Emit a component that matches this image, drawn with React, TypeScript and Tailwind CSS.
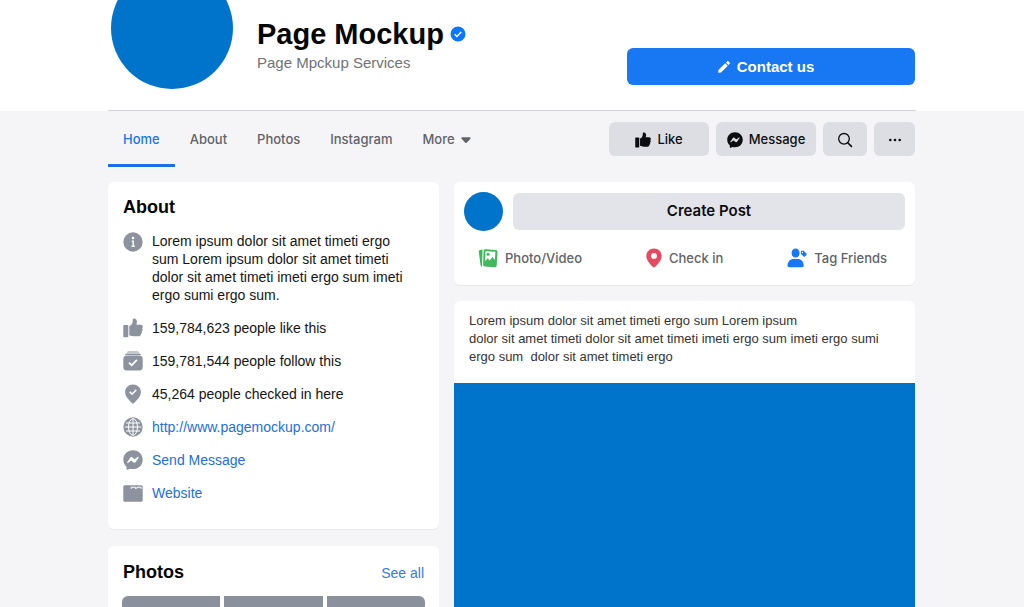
import type { ReactNode } from 'react'

interface IconProps {
  className?: string
}

interface InfoItem {
  icon: ReactNode
  text: string
  href?: string
}

const uiFont = 'font-[Inter,sans-serif]'

function ThumbIcon({ className }: IconProps) {
  return (
    <svg viewBox="0 0 20 20" className={className} fill="currentColor" aria-hidden="true">
      <rect x="0.3" y="7" width="5" height="12.3" rx="0.8" />
      <path d="M6.3 8.2C8.5 7.200 9.6 5.500 9.7 3.300V1.900c0-1 .8-1.500 1.700-1.300 1.600.3 2.500 1.600 2.500 3.200 0 1.100-.2 2-.5 2.900h4.300c1.300 0 2.100.9 2.100 2 0 .7-.3 1.200-.7 1.500.4.400.7.900.6 1.600-.1.700-.5 1.200-1 1.500.2.400.3.800.2 1.300-.1.700-.6 1.200-1.100 1.400.1.200.1.500 0 .8-.2.900-1 1.500-2 1.500H11c-1.800 0-3.300-.3-4.700-1z" />
    </svg>
  )
}

function MessengerIcon({ className }: IconProps) {
  return (
    <svg viewBox="0 0 20 20" className={className} fill="currentColor" aria-hidden="true">
      <path
        fillRule="evenodd"
        d="M10 .3C4.500.3.300 4.300.300 9.700c0 2.900 1.200 5.300 3.200 7v2.300c0 .7.700 1 1.300.7l2-1c1 .3 2.100.4 3.200.4 5.500 0 9.700-4 9.700-9.400S15.500.3 10 .3ZM4.200 12.200l2.900-4.500c.5-.7 1.400-.9 2.100-.4l2.200 1.700c.2.1.4.1.600 0l2.900-2.200c.5-.3 1.100.2.8.7l-2.900 4.500c-.5.7-1.400.9-2.100.4L8.500 10.700c-.2-.1-.4-.1-.6 0L5 12.900c-.4.3-1.100-.2-.8-.7Z"
      />
    </svg>
  )
}

function InfoIcon() {
  return (
    <svg viewBox="0 0 20 20" className="size-5" aria-hidden="true">
      <circle cx="10" cy="10" r="9.7" fill="currentColor" />
      <circle cx="10" cy="6" r="1.3" fill="#fff" />
      <path d="M8.700 9.100h1.500v5M8.600 14.300h3.200" fill="none" stroke="#fff" strokeWidth="1.400" />
    </svg>
  )
}

function FollowIcon() {
  return (
    <svg viewBox="0 0 20 20" className="size-5" fill="none" aria-hidden="true">
      <path d="M3.600 1.600C4 .8 4.700.4 5.600.4h8.800c.9 0 1.600.4 2 1.200z" fill="currentColor" />
      <path d="M2 3.900c.3-1 1-1.500 2-1.500h12c1 0 1.700.5 2 1.500z" fill="currentColor" />
      <rect x="0.300" y="4.400" width="19.400" height="15.200" rx="3.500" fill="currentColor" />
      <path d="m6 11.600 2.700 2.700 5.200-5.400" stroke="#fff" strokeWidth="1.800" />
    </svg>
  )
}

function CheckinIcon() {
  return (
    <svg viewBox="0 0 20 20" className="size-5" fill="none" aria-hidden="true">
      <path
        d="M10 .4c-4.400 0-7.900 3.200-7.900 7.500 0 4.800 4.600 8.700 7 11.300.5.500 1.300.500 1.800 0 2.400-2.600 7-6.500 7-11.300C17.900 3.600 14.400.4 10 .4Z"
        fill="currentColor"
      />
      <path d="m6.700 7.900 2.400 2.300 4.200-4.400" stroke="#fff" strokeWidth="1.600" />
    </svg>
  )
}

function GlobeIcon() {
  return (
    <svg viewBox="0 0 20 20" className="size-5" fill="none" aria-hidden="true">
      <circle cx="10" cy="10" r="9.700" fill="currentColor" />
      <g stroke="#fff" strokeWidth="1">
        <ellipse cx="10" cy="10" rx="4.500" ry="8.300" />
        <path d="M10 1.500v17M1.700 10h16.600M3 6h14M3 14h14" />
      </g>
    </svg>
  )
}

function WebsiteIcon() {
  return (
    <svg viewBox="0 0 20 20" className="size-5" aria-hidden="true">
      <rect x="0.300" y="2.300" width="19.400" height="16.400" rx="1.500" fill="currentColor" />
      <path d="M8.200 5.900V4.200h4.200v1.700M13.900 5.900V4.200h4.200v1.700" fill="none" stroke="#fff" strokeWidth="1" />
    </svg>
  )
}

function VerifiedIcon() {
  return (
    <svg viewBox="0 0 16 16" className="size-4" role="img" aria-label="Verified">
      <circle cx="8" cy="8" r="7.500" fill="#0a78fa" />
      <path d="m4.700 8.200 2.200 2.200 4.300-4.500" fill="none" stroke="#fff" strokeWidth="1.400" />
    </svg>
  )
}

function PencilIcon() {
  return (
    <svg viewBox="0 0 12 12" className="size-3" fill="currentColor" aria-hidden="true">
      <path d="M.4 9 7.200 2.200l2.600 2.600L3 11.600l-2.700.2zM8 1.400 9.200.400c.4-.4.900-.4 1.300 0l1.100 1.100c.4.400.4.900 0 1.300L10.500 4z" />
    </svg>
  )
}

function SearchIcon() {
  return (
    <svg viewBox="0 0 16 16" className="size-4" fill="none" stroke="currentColor" strokeLinecap="round" aria-hidden="true">
      <circle cx="7" cy="6.800" r="5.300" strokeWidth="1.300" />
      <path d="m11 11 3.400 3.300" strokeWidth="1.700" />
    </svg>
  )
}

function DotsIcon() {
  return (
    <svg viewBox="0 0 14 4" className="h-1 w-3.5" fill="currentColor" aria-hidden="true">
      <circle cx="2.300" cy="2" r="1.300" />
      <circle cx="7" cy="2" r="1.300" />
      <circle cx="11.700" cy="2" r="1.300" />
    </svg>
  )
}

function PhotoIcon() {
  return (
    <svg viewBox="0 0 20 20" className="size-5" aria-hidden="true">
      <path d="M1.500 2.300 4 1.600c.4-.1.600.1.600.5L4 18.200c0 .5-.6.600-.9.200-.4-.5-.6-1.200-.7-2L.8 3.700c-.1-.8.100-1.200.7-1.400Z" fill="#42b85e" />
      <path d="M7.500 1.200 17.700 1.900c1.200.1 1.900.9 1.800 2l-.8 13.600c-.1 1.200-.9 1.900-2 1.800l-9.900-.7c-1.100-.1-1.800-.9-1.700-2l.5-13.700c0-1.100.8-1.800 1.900-1.700Z" fill="#42b85e" />
      <path d="m7.500 3.200 9.900.6-.5 8.300-2.500-3-2.700 3.300-2-2.200-2.500 3z" fill="#fff" />
      <circle cx="10" cy="6.300" r="1.500" fill="#42b85e" />
    </svg>
  )
}

function PinIcon() {
  return (
    <svg viewBox="0 0 16 20" className="h-5 w-4" fill="#e34b60" aria-hidden="true">
      <path
        fillRule="evenodd"
        d="M8 .4C3.600.4.300 3.600.300 7.900c0 4.700 4.400 8.500 6.800 11.200.5.600 1.300.6 1.800 0 2.400-2.700 6.800-6.500 6.800-11.200C15.700 3.600 12.400.4 8 .4Zm0 10.400a2.900 2.900 0 1 1 0-5.800 2.900 2.900 0 0 1 0 5.800Z"
      />
    </svg>
  )
}

function TagIcon() {
  return (
    <svg viewBox="0 0 20 20" className="size-5" fill="#1877f2" aria-hidden="true">
      <ellipse cx="8.600" cy="5" rx="4" ry="4.500" />
      <path d="M.5 17.500c0-4 2.700-6.600 6-6.600h4.200c3.300 0 6 2.600 6 6.600 0 1-.8 1.700-1.800 1.700H2.300c-1 0-1.800-.7-1.800-1.700Z" />
      <path d="M13.800 3.900c0-.7.400-1.100 1.100-1.100h1.800l2.700 2.700c.5.500.5.900 0 1.400l-1.500 1.500c-.5.500-.9.500-1.400 0L13.800 5.700z" />
      <circle cx="15.400" cy="4.400" r=".7" fill="#fff" />
    </svg>
  )
}

const tabs = ['Home', 'About', 'Photos', 'Instagram']

const info: InfoItem[] = [
  { icon: <ThumbIcon className="size-5" />, text: '159,784,623 people like this' },
  { icon: <FollowIcon />, text: '159,781,544 people follow this' },
  { icon: <CheckinIcon />, text: '45,264 people checked in here' },
  { icon: <GlobeIcon />, text: 'http://www.pagemockup.com/', href: '#site' },
  { icon: <MessengerIcon className="size-5" />, text: 'Send Message', href: '#message' },
  { icon: <WebsiteIcon />, text: 'Website', href: '#website' },
]

const postActions = [
  { icon: <PhotoIcon />, label: 'Photo/Video' },
  { icon: <PinIcon />, label: 'Check in' },
  { icon: <TagIcon />, label: 'Tag Friends' },
]

function Header() {
  return (
    <header className="overflow-hidden bg-white">
      <div className="mx-auto flex max-w-[808px] items-start border-b border-[#d3d4d8] pr-px pb-[21px] pl-[3px]">
        <div className="-mt-[33px] size-[122px] shrink-0 rounded-full bg-[#0074cb]" />
        <div className="ml-6 pt-4">
          <h1 className="flex items-center gap-1.5 text-[29px] leading-9 font-bold text-[#050505]">
            Page Mockup
            <VerifiedIcon />
          </h1>
          <p className="text-[15px] leading-[22px] text-[#707276]">Page Mpckup Services</p>
        </div>
        <button
          type="button"
          className="mt-12 ml-auto flex h-[37px] w-72 items-center justify-center gap-[7px] rounded-md bg-[#1877f2] pt-px pr-2.5 text-[15px] font-bold text-white"
        >
          <PencilIcon />
          Contact us
        </button>
      </div>
    </header>
  )
}

function NavBar() {
  const action = 'flex h-[34px] items-center justify-center gap-1.5 rounded-md bg-[#dddee3] pt-px'

  return (
    <div className={`mx-auto flex max-w-[808px] justify-between pr-px text-[13px] font-medium ${uiFont}`}>
      <nav className="flex h-14">
        {tabs.map((tab) => (
          <a
            key={tab}
            href={`#${tab.toLowerCase()}`}
            className={`flex items-center border-b-[3px] px-[15px] pt-1 ${
              tab === 'Home' ? 'border-[#1a6fe8] text-[#1b74f0]' : 'border-transparent text-[#606368]'
            }`}
          >
            {tab}
          </a>
        ))}
        <button type="button" className="flex items-center gap-1.5 border-b-[3px] border-transparent px-[15px] pt-1 text-[#606368]">
          More
          <svg viewBox="0 0 10 6" className="h-1.5 w-2.5" fill="currentColor" aria-hidden="true">
            <path d="M1.300.2h7.400c1 0 1.300.9.700 1.500L6 5.500c-.6.600-1.400.6-2 0L.6 1.700C0 1.100.300.2 1.300.2Z" />
          </svg>
        </button>
      </nav>
      <div className="mt-[11px] flex gap-[7px] text-[#0c0d0f]">
        <button type="button" className={`${action} w-[100px]`}>
          <ThumbIcon className="size-4" />
          Like
        </button>
        <button type="button" className={`${action} w-[100px]`}>
          <MessengerIcon className="size-4" />
          Message
        </button>
        <button type="button" aria-label="Search" className={`${action} w-11`}>
          <SearchIcon />
        </button>
        <button type="button" aria-label="More options" className={`${action} w-[41px]`}>
          <DotsIcon />
        </button>
      </div>
    </div>
  )
}

function AboutCard() {
  return (
    <section className="rounded-md bg-white px-[15px] pt-[13px] pb-[26px] shadow-2xs">
      <h2 className="text-lg leading-6 font-bold text-[#050505]">About</h2>
      <ul className="mt-[13px] flex flex-col gap-[13px] text-sm text-[#141414]">
        <li className="flex gap-[9px] pb-px leading-[18px]">
          <span className="shrink-0 text-[#8c939e]">
            <InfoIcon />
          </span>
          <p>
            Lorem ipsum dolor sit amet timeti ergo
            <br />
            sum Lorem ipsum dolor sit amet timeti
            <br />
            dolor sit amet timeti imeti ergo sum imeti
            <br />
            ergo sumi ergo sum.
          </p>
        </li>
        {info.map((item) => (
          <li key={item.text} className="flex items-center gap-[9px]">
            <span className="shrink-0 text-[#8c939e]">{item.icon}</span>
            {item.href ? (
              <a href={item.href} className="text-[#216fdb]">
                {item.text}
              </a>
            ) : (
              <span>{item.text}</span>
            )}
          </li>
        ))}
      </ul>
    </section>
  )
}

function PhotosCard() {
  return (
    <section className="rounded-md bg-white p-3.5 shadow-2xs">
      <div className="flex items-center justify-between px-px">
        <h2 className="text-lg leading-6 font-bold text-[#050505]">Photos</h2>
        <a href="#photos" className="pt-0.5 text-sm text-[#2f7de9]">
          See all
        </a>
      </div>
      <div className="mt-3 grid grid-cols-3 gap-1 overflow-hidden rounded-md">
        {[0, 1, 2].map((i) => (
          <div key={i} className="aspect-square bg-[#8b919c]" />
        ))}
      </div>
    </section>
  )
}

function CreatePostCard() {
  return (
    <section className={`rounded-md bg-white px-2.5 pt-2.5 pb-[17px] shadow-2xs ${uiFont}`}>
      <div className="flex items-center gap-2.5">
        <div className="size-[39px] shrink-0 rounded-full bg-[#0074cb]" />
        <button type="button" className="h-[37px] flex-1 rounded-md bg-[#e3e4e9] text-[15px] font-semibold text-[#0c0d0f]">
          Create Post
        </button>
      </div>
      <div className="mt-[17px] flex justify-between pr-[18px] pl-3.5">
        {postActions.map((item) => (
          <button key={item.label} type="button" className="flex items-center gap-[7px] text-[13px] leading-5 font-medium text-[#606368]">
            {item.icon}
            {item.label}
          </button>
        ))}
      </div>
    </section>
  )
}

function Post() {
  return (
    <article className="overflow-hidden rounded-md bg-white shadow-2xs">
      <p className="px-[15px] pt-[11px] pb-[17px] text-[13px] leading-[18px] text-[#333]">
        Lorem ipsum dolor sit amet timeti ergo sum Lorem ipsum
        <br />
        dolor sit amet timeti dolor sit amet timeti imeti ergo sum imeti ergo sumi
        <br />
        ergo sum &nbsp;dolor sit amet timeti ergo
      </p>
      <div className="h-80 bg-[#0074cb]" />
    </article>
  )
}

export default function App() {
  return (
    <div className="min-h-screen bg-[#f5f5f8] font-['Liberation_Sans',Arial,sans-serif]">
      <Header />
      <NavBar />
      <main className="mx-auto mt-[15px] grid max-w-[808px] grid-cols-[331fr_461fr] items-start gap-[15px] pr-px">
        <div className="flex flex-col gap-[17px]">
          <AboutCard />
          <PhotosCard />
        </div>
        <div className="flex flex-col gap-4">
          <CreatePostCard />
          <Post />
        </div>
      </main>
    </div>
  )
}
